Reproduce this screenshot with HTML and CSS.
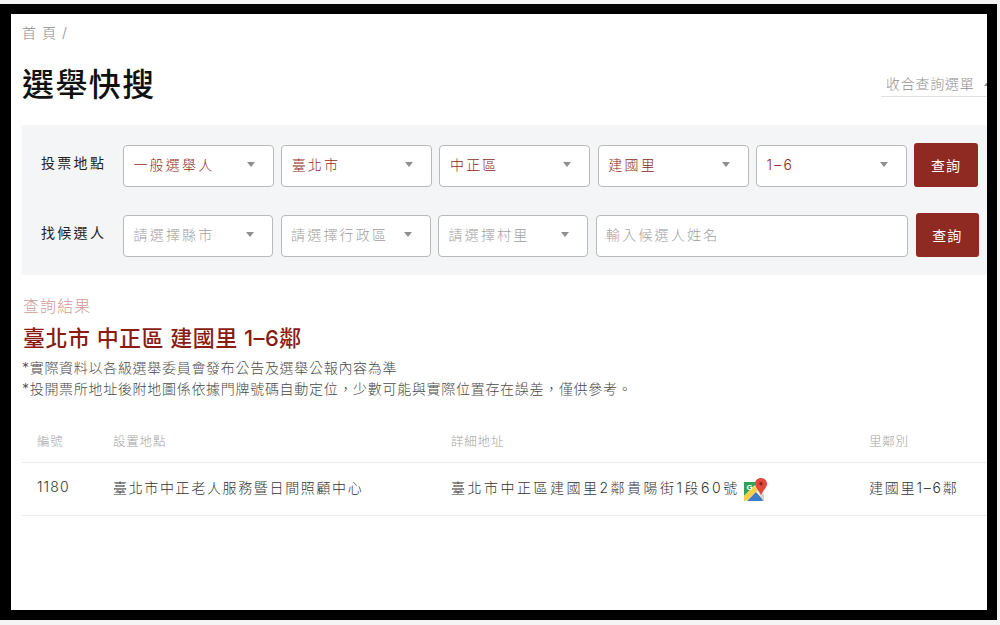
FILE: index.html
```html
<!DOCTYPE html>
<html lang="zh-Hant">
<head>
<meta charset="utf-8">
<title>選舉快搜</title>
<link rel="stylesheet" href="styles.css">
</head>
<body>
<div class="frame">
  <main class="page">
    <nav class="crumb">首頁/</nav>
    <header class="head">
      <h1 class="title">選舉快搜</h1>
      <div class="collapse"><span>收合查詢選單</span><i class="caret up"></i></div>
    </header>
    <section class="panel">
      <div class="row first">
        <label class="lab">投票地點</label>
        <div class="sel val"><span>一般選舉人</span><i class="caret"></i></div>
        <div class="sel val"><span>臺北市</span><i class="caret"></i></div>
        <div class="sel val"><span>中正區</span><i class="caret"></i></div>
        <div class="sel val"><span>建國里</span><i class="caret"></i></div>
        <div class="sel val"><span>1–6</span><i class="caret"></i></div>
        <button class="btn">查詢</button>
      </div>
      <div class="row second">
        <label class="lab">找候選人</label>
        <div class="sel"><span>請選擇縣市</span><i class="caret"></i></div>
        <div class="sel"><span>請選擇行政區</span><i class="caret"></i></div>
        <div class="sel"><span>請選擇村里</span><i class="caret"></i></div>
        <div class="sel grow"><span>輸入候選人姓名</span></div>
        <button class="btn">查詢</button>
      </div>
    </section>
    <section class="result">
      <div class="kicker">查詢結果</div>
      <h2 class="place">臺北市 中正區 建國里 1–6鄰</h2>
      <p class="note">*實際資料以各級選舉委員會發布公告及選舉公報內容為準</p>
      <p class="note">*投開票所地址後附地圖係依據門牌號碼自動定位<span class="punct">，</span>少數可能與實際位置存在誤差<span class="punct">，</span>僅供參考<span class="punct">。</span></p>
    </section>
    <div class="table">
      <div class="tr th">
        <div>編號</div><div>設置地點</div><div>詳細地址</div><div>里鄰別</div>
      </div>
      <div class="tr td">
        <div class="num">1180</div><div class="loc">臺北市中正老人服務暨日間照顧中心</div>
        <div class="addr"><span>臺北市中正區建國里2鄰貴陽街1段60號</span>
          <svg class="map" viewBox="0 0 24 24" width="24" height="24" aria-hidden="true">
            <path d="M0 4h19v19H0z" fill="#f4f1e4"/>
            <path d="M0 4h14L0 18z" fill="#2fa25a"/>
            <path d="M0 18 10 8l4 4L2 23H0z" fill="#f7cf45"/>
            <path d="M3 23l9-9 8 9z" fill="#3f7cc4"/>
            <path d="M13 11l2-2 5 8v6h-1z" fill="#d8d4cc"/>
            <path d="M17 0c-3.600 0-6 2.500-6 5.800 0 4 4 6.500 6 11.200 2-4.700 6-7.200 6-11.200C23 2.500 20.600 0 17 0z" fill="#dd4b3e"/>
            <circle cx="17" cy="5.800" r="1.700" fill="#8e2419"/>
            <text x="2.500" y="12" class="g">G</text>
          </svg>
        </div>
        <div class="name">建國里1–6鄰</div>
      </div>
    </div>
  </main>
</div>
</body>
</html>
```
FILE: styles.css
```css
* { box-sizing: border-box; }
html, body { margin: 0; height: 100%; }
body {
  width: 1000px;
  height: 625px;
  overflow: hidden;
  background: #f4f4f4;
  font-family: "Inter", "Noto Sans CJK TC", "Liberation Sans", sans-serif;
  font-weight: 300;
  padding: 4px 3px 5px 0;
}
.frame {
  height: 616px;
  background: #fff;
  border: solid #000;
  border-width: 10px 10px 10px 11px;
  overflow: hidden;
}
.page { padding: 9px 0 0 11px; width: 976px; }
.crumb { font-size: 14px; line-height: 20px; letter-spacing: 6px; color: #8c8c8c; }
.head { display: flex; justify-content: space-between; align-items: flex-start; margin-top: 16px; height: 66px; }
.title { margin: 3px 0 0 0; font-size: 32px; line-height: 46px; font-weight: 500; letter-spacing: 1.400px; color: #111; }
.collapse {
  display: flex; align-items: center; gap: 9px;
  width: 106px; height: 27px; margin-top: 11px; padding-left: 5px;
  border-bottom: 1px solid #e2e2e2; overflow: hidden;
  font-size: 14px; letter-spacing: .75px; color: #8f8f8f; white-space: nowrap; flex: none;
}
.panel { background: #f4f5f7; height: 150px; padding: 18px 8px 0 19px; }
.row { display: flex; height: 44px; gap: 7.400px; }
.second { gap: 7.500px; margin-top: 26px; }
.lab { width: 74.500px; flex: none; padding-top: 10px; font-size: 14px; line-height: 20px; letter-spacing: 2.300px; color: #222; font-weight: 400; white-space: nowrap; }
.sel {
  display: flex; align-items: center; justify-content: space-between;
  width: 150.900px; flex: none; height: 42px; align-self: flex-end; padding: 0 18px 4px 9.500px;
  background: #fff; border: 1px solid #b9b9b9; border-radius: 4px;
  font-size: 14px; letter-spacing: 2.200px; color: #a0a0a0; white-space: nowrap;
}
.val { color: #8e2a22; }
.second .sel { width: 150px; }
.second .grow { flex: 1; }
.caret { width: 0; height: 0; border: 4.500px solid transparent; border-top: 5px solid #8f8f8f; border-bottom: 0; flex: none; }
.caret.up { border-top: 0; border-bottom: 5px solid #8f8f8f; }
.btn {
  width: 63.500px; height: 44px; flex: none; border: 0; border-radius: 3px;
  background: #8e2a22; color: #fff; font: inherit; font-weight: 400; font-size: 14px; letter-spacing: 1px;
}
.result { padding-top: 19px; }
.kicker { font-size: 16px; line-height: 24px; letter-spacing: 1.100px; color: #cf9c97; padding-left: 1px; }
.place { margin: 5px 0 4px; font-size: 22px; line-height: 30px; font-weight: 500; color: #8a1c14; letter-spacing: .45px; padding-left: 1px; }
.note { margin: 0; font-size: 14px; line-height: 21px; letter-spacing: .7px; color: #4a4a4a; }
.punct { font-family: "Noto Sans CJK SC", sans-serif; }
.table { margin-top: 19px; }
.tr { display: grid; grid-template-columns: 76px 338px 418px 1fr; padding-left: 15px; align-items: center; border-bottom: 1px solid #ececec; }
.th { height: 45px; font-size: 12.500px; letter-spacing: .8px; color: #a3a3a3; }
.td { height: 53px; padding-bottom: 5px; font-size: 14px; color: #333; }
.num { letter-spacing: 1.100px; }
.loc { letter-spacing: 1.650px; }
.name { letter-spacing: 1.800px; }
.addr { display: flex; align-items: center; gap: 4.500px; letter-spacing: 2.500px; }
.map { flex: none; margin-top: 7px; }
.g { font: 700 8px "Liberation Sans", sans-serif; fill: #fff; }
```
